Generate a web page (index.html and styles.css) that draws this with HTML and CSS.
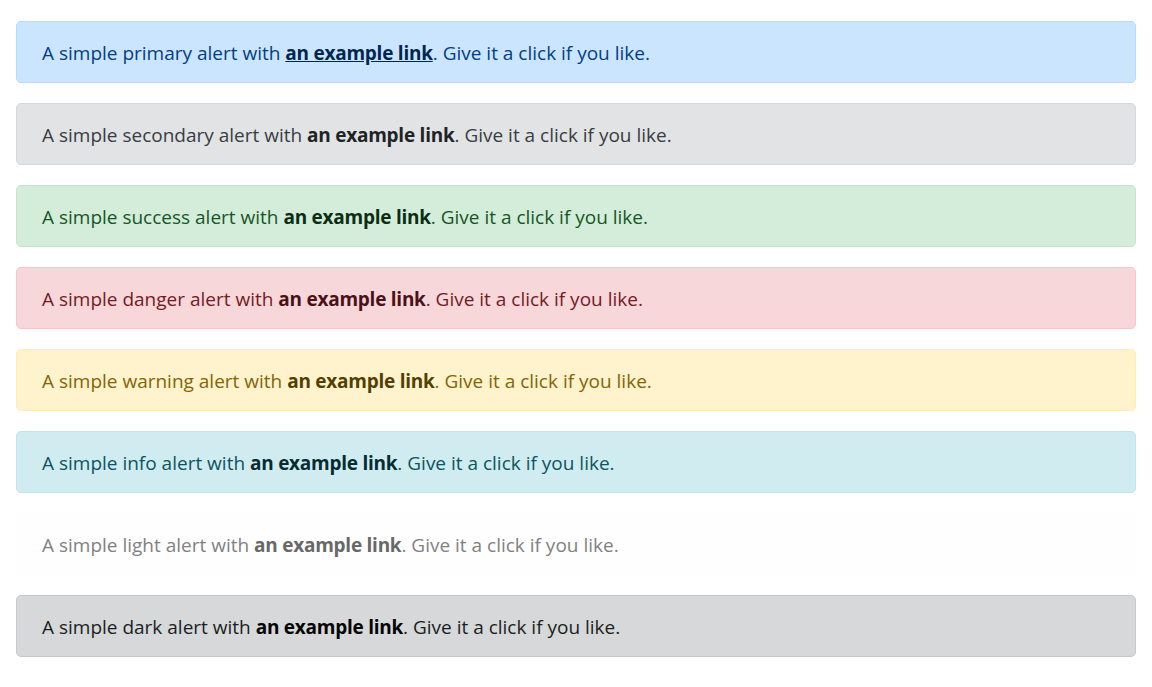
FILE: index.html
```html
<!DOCTYPE html>
<html lang="en">
<head>
<meta charset="utf-8">
<title>Alerts</title>
<link rel="stylesheet" href="styles.css">
</head>
<body>
<div class="page">
  <div class="alert alert-primary">A simple primary alert with <a href="#" class="alert-link is-hover">an example link</a>. Give it a click if you like.</div>
  <div class="alert alert-secondary">A simple secondary alert with <a href="#" class="alert-link">an example link</a>. Give it a click if you like.</div>
  <div class="alert alert-success">A simple success alert with <a href="#" class="alert-link">an example link</a>. Give it a click if you like.</div>
  <div class="alert alert-danger">A simple danger alert with <a href="#" class="alert-link">an example link</a>. Give it a click if you like.</div>
  <div class="alert alert-warning">A simple warning alert with <a href="#" class="alert-link">an example link</a>. Give it a click if you like.</div>
  <div class="alert alert-info">A simple info alert with <a href="#" class="alert-link">an example link</a>. Give it a click if you like.</div>
  <div class="alert alert-light">A simple light alert with <a href="#" class="alert-link">an example link</a>. Give it a click if you like.</div>
  <div class="alert alert-dark">A simple dark alert with <a href="#" class="alert-link">an example link</a>. Give it a click if you like.</div>
</div>
</body>
</html>
```
FILE: styles.css
```css
html, body {
  margin: 0;
  padding: 0;
  background: #fff;
}
body {
  font-family: "Open Sans", "Noto Sans", sans-serif;
  font-size: 20px;
  line-height: 1.5;
}
.page {
  padding: 21px 16px 0;
  display: flex;
  flex-direction: column;
  gap: 20px;
}
.alert {
  border: 1px solid transparent;
  border-radius: 5px;
  padding: 16px 25px 14px;
  font-size: 19px;
  line-height: 30px;
  white-space: nowrap;
}
.alert-link {
  font-weight: 700;
  letter-spacing: -0.25px;
  text-decoration: none;
  color: inherit;
}
.alert-link.is-hover { text-decoration: underline; }

.alert-primary { color: #004085; background: #cce5ff; border-color: #b8daff; }
.alert-primary .alert-link { color: #002752; }
.alert-secondary { color: #383d41; background: #e2e3e5; border-color: #d6d8db; }
.alert-secondary .alert-link { color: #202326; }
.alert-success { color: #155724; background: #d4edda; border-color: #c3e6cb; }
.alert-success .alert-link { color: #0b2e13; }
.alert-danger { color: #721c24; background: #f8d7da; border-color: #f5c6cb; }
.alert-danger .alert-link { color: #491217; }
.alert-warning { color: #856404; background: #fff3cd; border-color: #ffeeba; }
.alert-warning .alert-link { color: #533f03; }
.alert-info { color: #0c5460; background: #d1ecf1; border-color: #bee5eb; }
.alert-info .alert-link { color: #062c33; }
.alert-light { color: #818182; background: #fefefe; border-color: #fdfdfe; }
.alert-light .alert-link { color: #686868; }
.alert-dark { color: #1b1e21; background: #d6d8d9; border-color: #c6c8ca; }
.alert-dark .alert-link { color: #040505; }
```
